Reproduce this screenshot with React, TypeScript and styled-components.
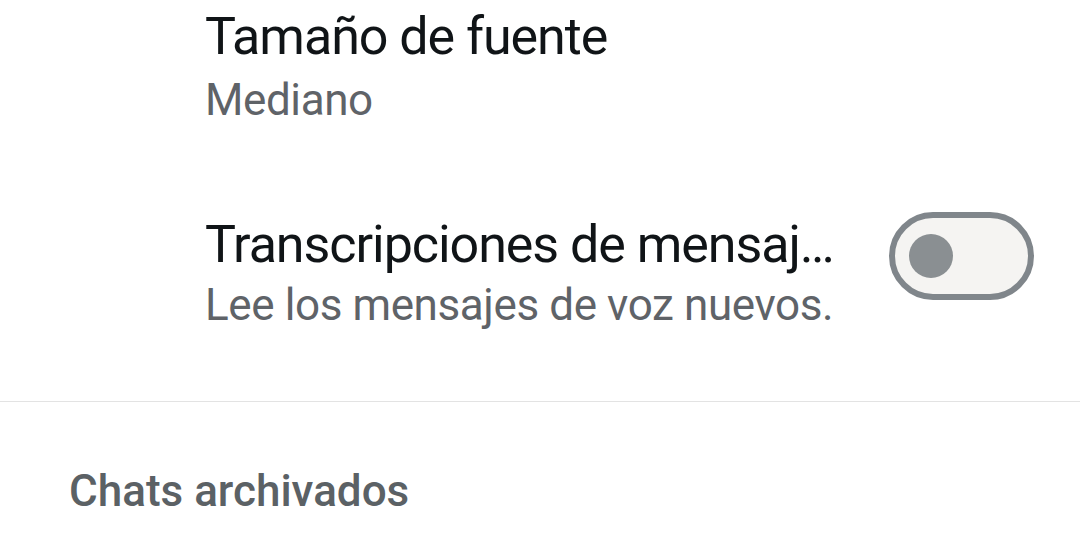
import React from "react";
import styled, { createGlobalStyle } from "styled-components";

const GlobalStyle = createGlobalStyle`
  html, body {
    margin: 0;
    padding: 0;
    background: #ffffff;
  }
  body {
    font-family: Roboto, "Noto Sans", "Liberation Sans", sans-serif;
    -webkit-font-smoothing: antialiased;
  }
`;

type ToggleProps = {
  checked?: boolean;
};

const Switch: React.FC<ToggleProps> = ({ checked = false }) => {
  return (
    <Track role="switch" aria-checked={checked} $checked={checked}>
      <Knob $checked={checked} />
    </Track>
  );
};

export default function App() {
  return (
    <>
      <GlobalStyle />
      <Screen>
        <Item>
          <TextBlock>
            <Title>Tamaño de fuente</Title>
            <Subtitle>Mediano</Subtitle>
          </TextBlock>
        </Item>

        <ToggleItem>
          <TextBlock>
            <Title>Transcripciones de mensaj…</Title>
            <Subtitle $gap={2}>Lee los mensajes de voz nuevos.</Subtitle>
          </TextBlock>
          <Switch />
        </ToggleItem>

        <Divider />

        <SectionHeader>Chats archivados</SectionHeader>
      </Screen>
    </>
  );
}

const Screen = styled.div`
  width: 1080px;
  height: 546px;
  overflow: hidden;
  padding-top: 6px;
  box-sizing: border-box;
  background: #ffffff;
`;

const Item = styled.div`
  display: flex;
  align-items: flex-start;
  padding: 0 46px 0 205px;
`;

const ToggleItem = styled(Item)`
  margin-top: 87px;
  gap: 20px;
`;

const TextBlock = styled.div`
  flex: 1;
  min-width: 0;
`;

const Title = styled.div`
  font-size: 52px;
  line-height: 62px;
  font-weight: 400;
  letter-spacing: -1.05px;
  color: #101417;
  white-space: nowrap;
`;

const Subtitle = styled.div<{ $gap?: number }>`
  margin-top: ${(p) => p.$gap ?? 5}px;
  font-size: 44px;
  line-height: 54px;
  letter-spacing: -0.4px;
  color: #5f6368;
  white-space: nowrap;
`;

const Track = styled.div<{ $checked: boolean }>`
  flex: none;
  margin-top: -2px;
  width: 145px;
  height: 88px;
  box-sizing: border-box;
  border: 6px solid #80868b;
  border-radius: 44px;
  background: #f5f4f2;
  display: flex;
  align-items: center;
  justify-content: ${(p) => (p.$checked ? "flex-end" : "flex-start")};
  padding: 0 14px;
`;

const Knob = styled.span<{ $checked: boolean }>`
  width: 44px;
  height: 44px;
  border-radius: 50%;
  background: ${(p) => (p.$checked ? "#ffffff" : "#8a8f92")};
`;

const Divider = styled.div`
  margin-top: 69px;
  height: 1px;
  background: #e3e3e3;
`;

const SectionHeader = styled.div`
  margin-top: 63px;
  padding-left: 69px;
  font-size: 44px;
  line-height: 52px;
  font-weight: 500;
  color: #5b6165;
`;
